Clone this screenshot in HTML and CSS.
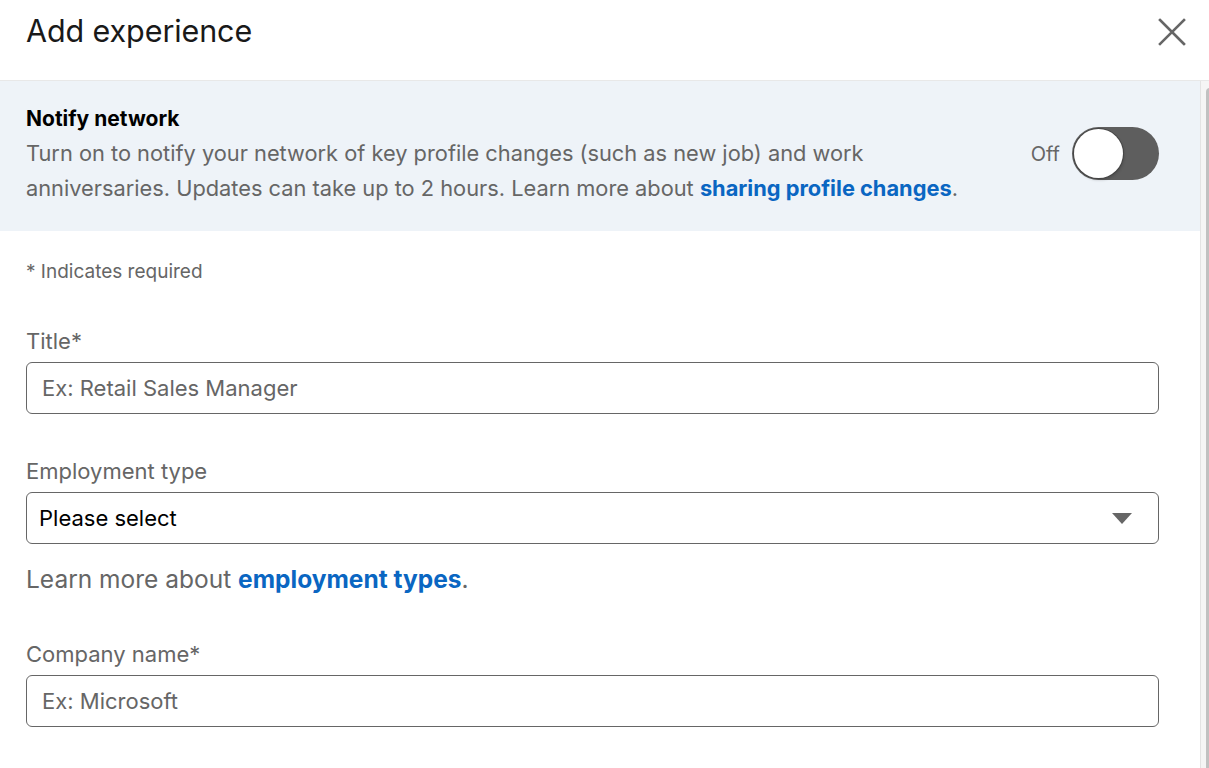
FILE: index.html
```html
<!DOCTYPE html>
<html lang="en">
<head>
  <meta charset="UTF-8">
  <meta name="viewport" content="width=device-width, initial-scale=1.0">
  <title>Add experience</title>
  <link rel="stylesheet" href="styles.css">
</head>
<body>
  <div class="modal">
    <div class="main">
      <header class="modal-header">
        <h1>Add experience</h1>
        <button class="close" aria-label="Dismiss">
          <svg width="28" height="28" viewBox="0 0 28 28">
            <path d="M2 2 L26 26 M26 2 L2 26" stroke="#666" stroke-width="2.6" stroke-linecap="square"/>
          </svg>
        </button>
      </header>

      <div class="scroll-area">
        <section class="notify">
          <div class="notify-text">
            <h2>Notify network</h2>
            <p>Turn on to notify your network of key profile changes (such as new job) and work anniversaries. Updates can take up to 2 hours. Learn more about <a href="#">sharing profile changes</a>.</p>
          </div>
          <div class="notify-toggle">
            <span>Off</span>
            <div class="switch"><div class="knob"></div></div>
          </div>
        </section>

        <form class="form">
          <p class="required-note">* Indicates required</p>

          <div class="field">
            <label>Title*</label>
            <div class="input placeholder">Ex: Retail Sales Manager</div>
          </div>

          <div class="field">
            <label>Employment type</label>
            <div class="input select">
              <span>Please select</span>
              <svg width="20" height="11" viewBox="0 0 20 11"><path d="M0 0 H20 L10 11 Z" fill="#666"/></svg>
            </div>
            <p class="hint">Learn more about <a href="#">employment types</a>.</p>
          </div>

          <div class="field last">
            <label>Company name*</label>
            <div class="input placeholder">Ex: Microsoft</div>
          </div>
        </form>
      </div>
    </div>
    <div class="scrollbar"><div class="thumb"></div></div>
  </div>
</body>
</html>
```

FILE: styles.css
```css
body {
  margin: 0;
  background-color: #fff;
  font-family: Inter, "Noto Sans", Arial, sans-serif;
  color: #666;
  overflow: hidden;
}
.modal {
  display: flex;
  height: 768px;
}
.main {
  flex: 1;
  display: flex;
  flex-direction: column;
}
.modal-header {
  height: 81px;
  border-bottom: 1px solid #e8e8e8;
  display: flex;
  align-items: center;
  justify-content: space-between;
  padding: 0 23px 20px 26px;
  box-sizing: border-box;
  margin-right: -9px;
}
.modal-header h1 {
  margin: 0;
  font-size: 30.5px;
  font-weight: 400;
  color: #191919;
  letter-spacing: -0.1px;
}
.close {
  background: none;
  border: none;
  padding: 0;
  width: 28px;
  height: 28px;
  margin-top: 4px;
}
.scroll-area {
  flex: 1;
}
.notify {
  background-color: #eef3f8;
  height: 150px;
  box-sizing: border-box;
  padding: 23px 41px 0 26px;
  display: flex;
  align-items: flex-start;
  justify-content: space-between;
}
.notify-text {
  max-width: 960px;
}
.notify h2 {
  margin: 0 0 2px 0;
  font-size: 21px;
  font-weight: 700;
  color: #000;
  line-height: 30px;
}
.notify p {
  margin: 0;
  font-size: 21.8px;
  line-height: 35px;
}
a {
  color: #0a66c2;
  font-weight: 700;
  text-decoration: none;
}
.notify-toggle {
  display: flex;
  align-items: center;
  gap: 12px;
  margin-top: 23px;
  font-size: 20px;
}
.switch {
  width: 87px;
  height: 53px;
  border-radius: 27px;
  background-color: #5e5e5e;
  position: relative;
}
.knob {
  position: absolute;
  left: 2px;
  top: 2px;
  width: 49px;
  height: 49px;
  border-radius: 50%;
  background-color: #fff;
  box-shadow: 0 0 0 1px #444, 1px 2px 3px rgba(0, 0, 0, 0.2);
}
.form {
  padding: 27px 41px 0 26px;
}
.required-note {
  margin: 0;
  font-size: 19px;
  line-height: 28px;
}
.field {
  margin-top: 42px;
}
.field + .field {
  margin-top: 44px;
}
.field.last {
  margin-top: 41px;
}
.field label {
  display: block;
  font-size: 22px;
  line-height: 26px;
  margin-bottom: 8px;
}
.input {
  height: 52px;
  box-sizing: border-box;
  border: 1.5px solid #666;
  border-radius: 6px;
  padding: 0 15px;
  display: flex;
  align-items: center;
  font-size: 22px;
}
.placeholder {
  color: #666;
}
.select {
  color: #000;
  padding: 0 26px 0 12px;
  justify-content: space-between;
}
.hint {
  margin: 14px 0 0 0;
  font-size: 24.5px;
  line-height: 42px;
}
.scrollbar {
  width: 8px;
  background-color: #f5f5f5;
  border-left: 1px solid #e3e3e3;
  margin-top: 81px;
  position: relative;
}
.thumb {
  position: absolute;
  left: 5px;
  top: 7px;
  width: 8px;
  height: 700px;
  border-radius: 4px;
  background-color: #c1c1c1;
}
```
